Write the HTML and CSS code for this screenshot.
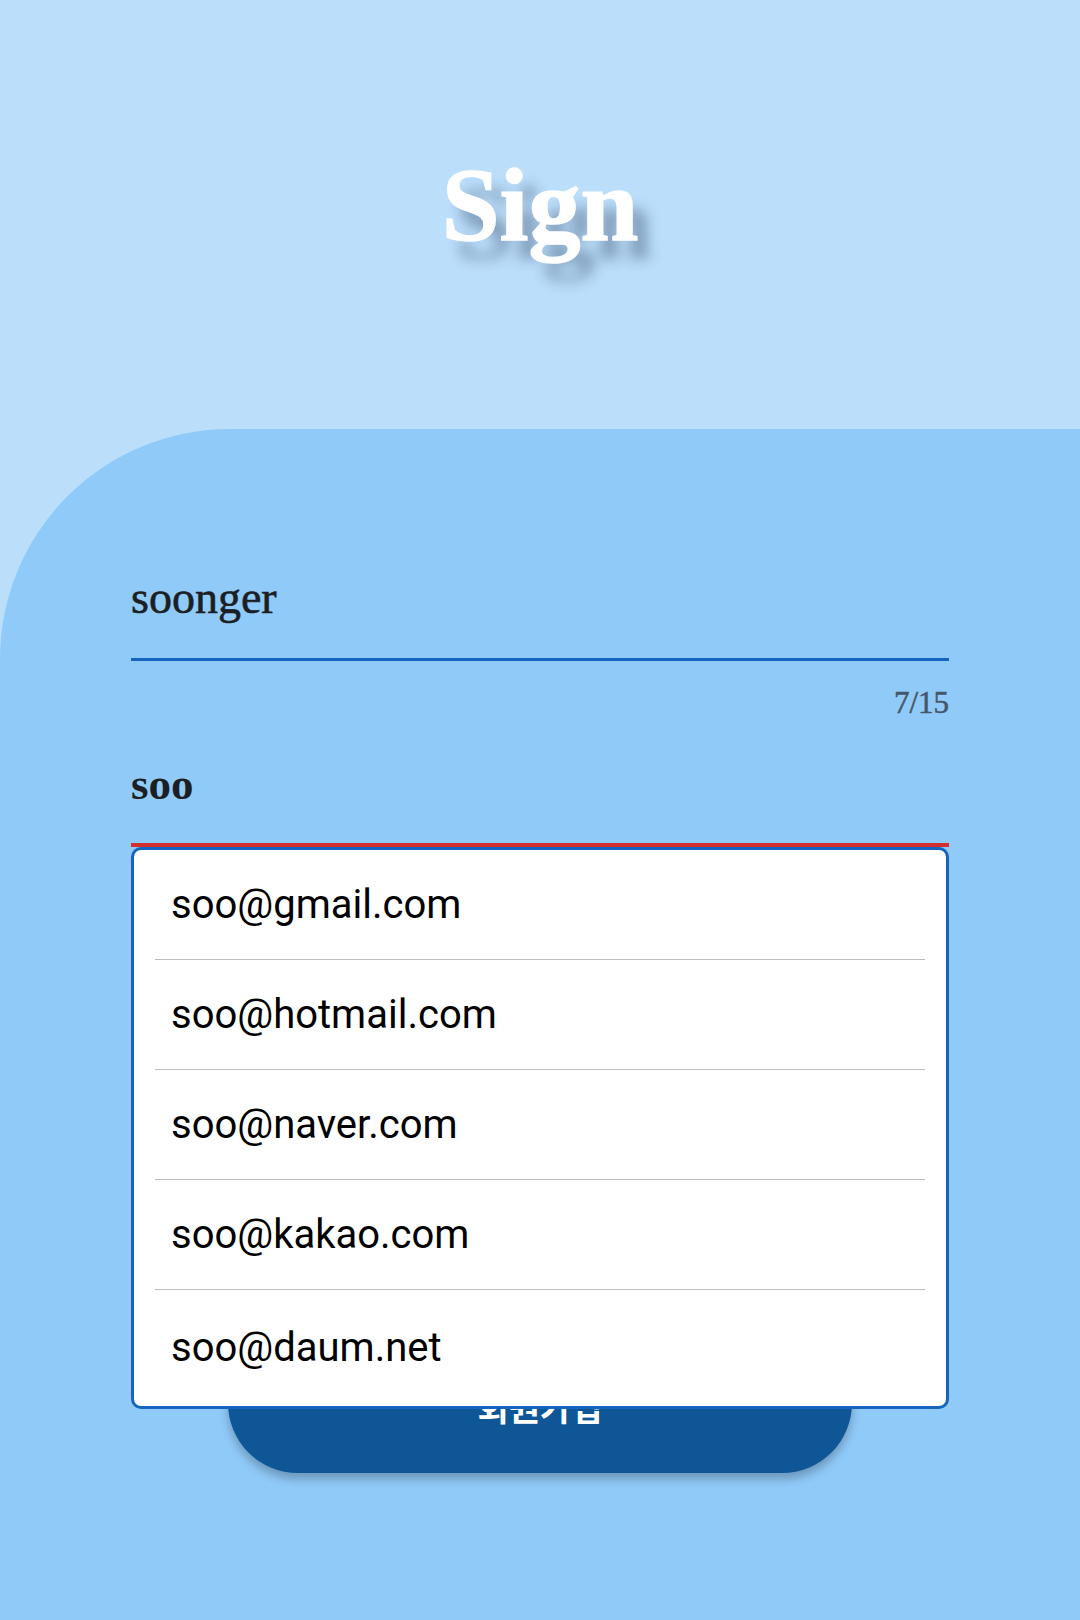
FILE: index.html
```html
<!DOCTYPE html>
<html lang="ko">
<head>
<meta charset="utf-8">
<title>Sign</title>
<link rel="stylesheet" href="styles.css">
</head>
<body>
<div class="page">
  <header class="top">
    <h1 class="title">Sign</h1>
  </header>
  <main class="card">
    <div class="field field-ok">
      <div class="value">soonger</div>
    </div>
    <div class="counter">7/15</div>
    <div class="email-wrap">
      <div class="field field-error">
        <div class="value value-bold">soo</div>
      </div>
      <ul class="suggest">
        <li class="item">soo@gmail.com</li>
        <li class="item">soo@hotmail.com</li>
        <li class="item">soo@naver.com</li>
        <li class="item">soo@kakao.com</li>
        <li class="item">soo@daum.net</li>
      </ul>
    </div>
    <button class="submit">회원가입</button>
  </main>
</div>
</body>
</html>
```

FILE: styles.css
```css
* { box-sizing: border-box; }

html, body {
  margin: 0;
  padding: 0;
}

body {
  width: 1080px;
  height: 1620px;
  overflow: hidden;
  background: #bbdefb;
}

.page {
  display: flex;
  flex-direction: column;
  height: 1620px;
}

.top {
  height: 429px;
  padding-top: 153px;
  display: flex;
  justify-content: center;
  align-items: flex-start;
}

.title {
  margin: 0;
  font-family: "Liberation Serif", serif;
  font-weight: 700;
  font-size: 104px;
  line-height: 104px;
  color: #ffffff;
  -webkit-text-stroke: 1.5px #ffffff;
  text-shadow: 14px 18px 14px rgba(25, 45, 75, 0.4);
}

.card {
  flex: 1;
  background: #90caf9;
  border-top-left-radius: 230px;
  padding: 144px 131px 0 131px;
  display: flex;
  flex-direction: column;
}

.field {
  padding-bottom: 35px;
}

.field-ok {
  border-bottom: 3px solid #1565c0;
}

.field-error {
  padding-bottom: 34px;
  border-bottom: 4px solid #d32f2f;
}

.value {
  font-family: "Liberation Serif", serif;
  font-size: 46px;
  line-height: 50px;
  color: #1b1f24;
  -webkit-text-stroke: 0.6px #1b1f24;
}

.value-bold {
  font-size: 45px;
  font-weight: 700;
  -webkit-text-stroke: 0;
}

.counter {
  margin-top: 24px;
  text-align: right;
  font-family: "Liberation Serif", serif;
  font-size: 31px;
  line-height: 36px;
  color: #46566a;
  -webkit-text-stroke: 0.5px #46566a;
}

.email-wrap {
  position: relative;
  margin-top: 38px;
}

.suggest {
  position: absolute;
  top: 100%;
  left: 0;
  right: 0;
  height: 562px;
  margin: 0;
  padding: 0 21px;
  list-style: none;
  background: #ffffff;
  border: 3px solid #1565c0;
  border-radius: 10px;
  z-index: 2;
  display: flex;
  flex-direction: column;
}

.item {
  flex: none;
  height: 110px;
  display: flex;
  align-items: center;
  padding-left: 16px;
  font-family: Roboto, "Liberation Sans", sans-serif;
  font-size: 40px;
  color: #000000;
  border-bottom: 1px solid #bdbdbd;
}

.item:last-child {
  border-bottom: none;
  height: 115px;
}

.submit {
  align-self: center;
  margin-top: 486px;
  width: 624px;
  height: 140px;
  padding-top: 8px;
  border: none;
  border-radius: 70px;
  background: #0f5697;
  color: #ffffff;
  font-family: "Noto Sans CJK KR", sans-serif;
  font-weight: 700;
  font-size: 34px;
  box-shadow: 0 6px 10px rgba(0, 0, 0, 0.25);
  position: relative;
  z-index: 1;
}
```
